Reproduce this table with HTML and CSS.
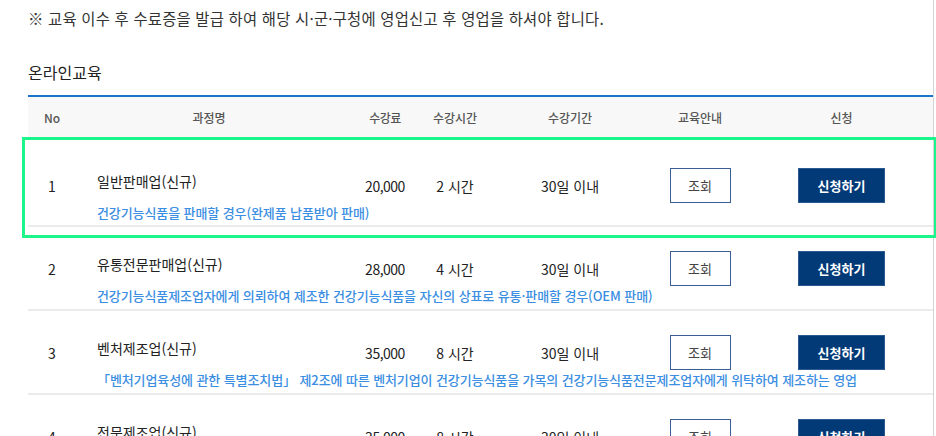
FILE: index.html
```html
<!DOCTYPE html>
<html lang="ko">
<head>
<meta charset="utf-8">
<title>온라인교육</title>
<link rel="stylesheet" href="styles.css">
</head>
<body>
<div class="page">
  <p class="notice">※ 교육 이수 후 수료증을 발급 하여 해당 시·군·구청에 영업신고 후 영업을 하셔야 합니다.</p>
  <h2 class="section-title">온라인교육</h2>
  <div class="course-table">
    <div class="row head">
      <div class="c-no">No</div>
      <div class="c-name">과정명</div>
      <div class="c-fee">수강료</div>
      <div class="c-hours">수강시간</div>
      <div class="c-period">수강기간</div>
      <div class="c-info">교육안내</div>
      <div class="c-apply">신청</div>
    </div>

    <div class="row course first">
      <div class="c-no">1</div>
      <div class="c-name title">일반판매업(신규)</div>
      <div class="c-fee">20,000</div>
      <div class="c-hours">2 시간</div>
      <div class="c-period">30일 이내</div>
      <div class="c-info"><button class="btn-view">조회</button></div>
      <div class="c-apply"><button class="btn-apply">신청하기</button></div>
      <div class="desc">건강기능식품을 판매할 경우(완제품 납품받아 판매)</div>
      <span class="highlight"></span>
    </div>

    <div class="row course">
      <div class="c-no">2</div>
      <div class="c-name title">유통전문판매업(신규)</div>
      <div class="c-fee">28,000</div>
      <div class="c-hours">4 시간</div>
      <div class="c-period">30일 이내</div>
      <div class="c-info"><button class="btn-view">조회</button></div>
      <div class="c-apply"><button class="btn-apply">신청하기</button></div>
      <div class="desc">건강기능식품제조업자에게 의뢰하여 제조한 건강기능식품을 자신의 상표로 유통·판매할 경우(OEM 판매)</div>
    </div>

    <div class="row course">
      <div class="c-no">3</div>
      <div class="c-name title">벤처제조업(신규)</div>
      <div class="c-fee">35,000</div>
      <div class="c-hours">8 시간</div>
      <div class="c-period">30일 이내</div>
      <div class="c-info"><button class="btn-view">조회</button></div>
      <div class="c-apply"><button class="btn-apply">신청하기</button></div>
      <div class="desc">「벤처기업육성에 관한 특별조치법」 제2조에 따른 벤처기업이 건강기능식품을 가목의 건강기능식품전문제조업자에게 위탁하여 제조하는 영업</div>
    </div>

    <div class="row course">
      <div class="c-no">4</div>
      <div class="c-name title">전문제조업(신규)</div>
      <div class="c-fee">35,000</div>
      <div class="c-hours">8 시간</div>
      <div class="c-period">30일 이내</div>
      <div class="c-info"><button class="btn-view">조회</button></div>
      <div class="c-apply"><button class="btn-apply">신청하기</button></div>
      <div class="desc">건강기능식품을 전문적으로 제조하여 판매하는 영업</div>
    </div>
  </div>
</div>
</body>
</html>
```

FILE: styles.css
```css
html, body {
  margin: 0;
  padding: 0;
  background: #fff;
  overflow: hidden;
}

body {
  font-family: "Noto Sans CJK KR", "Noto Sans", sans-serif;
  color: #222;
}

.page {
  width: 905px;
  min-height: 100vh;
  padding-left: 28px;
  border-right: 1px solid #d4d4d4;
  box-sizing: content-box;
}

.notice {
  margin: 0;
  padding-top: 7px;
  font-size: 15.4px;
  line-height: 22px;
  color: #333;
  letter-spacing: 0.2px;
}

.section-title {
  margin: 0;
  padding-top: 32px;
  font-size: 16px;
  line-height: 22px;
  font-weight: 400;
  color: #222;
}

.course-table {
  margin-top: 12px;
  border-top: 2px solid #1a74c8;
}

.row {
  display: grid;
  grid-template-columns: 32px 282px 70px 70px 160px 100px 183px;
  padding-left: 8px;
  align-items: center;
  text-align: center;
}

.head {
  height: 40px;
  background: #f8f8f8;
  border-bottom: 1px solid #e2e2e2;
  font-size: 12px;
  font-weight: 500;
  color: #555;
}

.course {
  position: relative;
  padding-top: 24px;
  padding-bottom: 3px;
  border-bottom: 2px solid #ebebeb;
  font-size: 14px;
  color: #222;
}

.course.first {
  padding-top: 30px;
  padding-bottom: 2px;
}

.course .title {
  text-align: left;
  padding-left: 29px;
  align-self: start;
  margin-top: 3px;
}

.c-fee {
  letter-spacing: -0.5px;
}

.desc {
  grid-column: 2 / 8;
  text-align: left;
  padding-left: 29px;
  font-size: 13px;
  line-height: 20px;
  font-weight: 500;
  color: #3b8ee2;
  white-space: nowrap;
  letter-spacing: -0.1px;
}

.btn-view,
.btn-apply {
  font-family: inherit;
  font-size: 13px;
  height: 35px;
  margin: 0;
  cursor: pointer;
  vertical-align: middle;
}

.btn-view {
  width: 61px;
  background: #fff;
  border: 1px solid #3b5f95;
  color: #444;
}

.btn-apply {
  width: 87px;
  background: #013a77;
  border: 1px solid #2a5a90;
  color: #fff;
  font-weight: 700;
}

.highlight {
  position: absolute;
  left: -6px;
  right: -4px;
  top: -1px;
  bottom: -13px;
  border: 3px solid #1cf58a;
  pointer-events: none;
}
```
